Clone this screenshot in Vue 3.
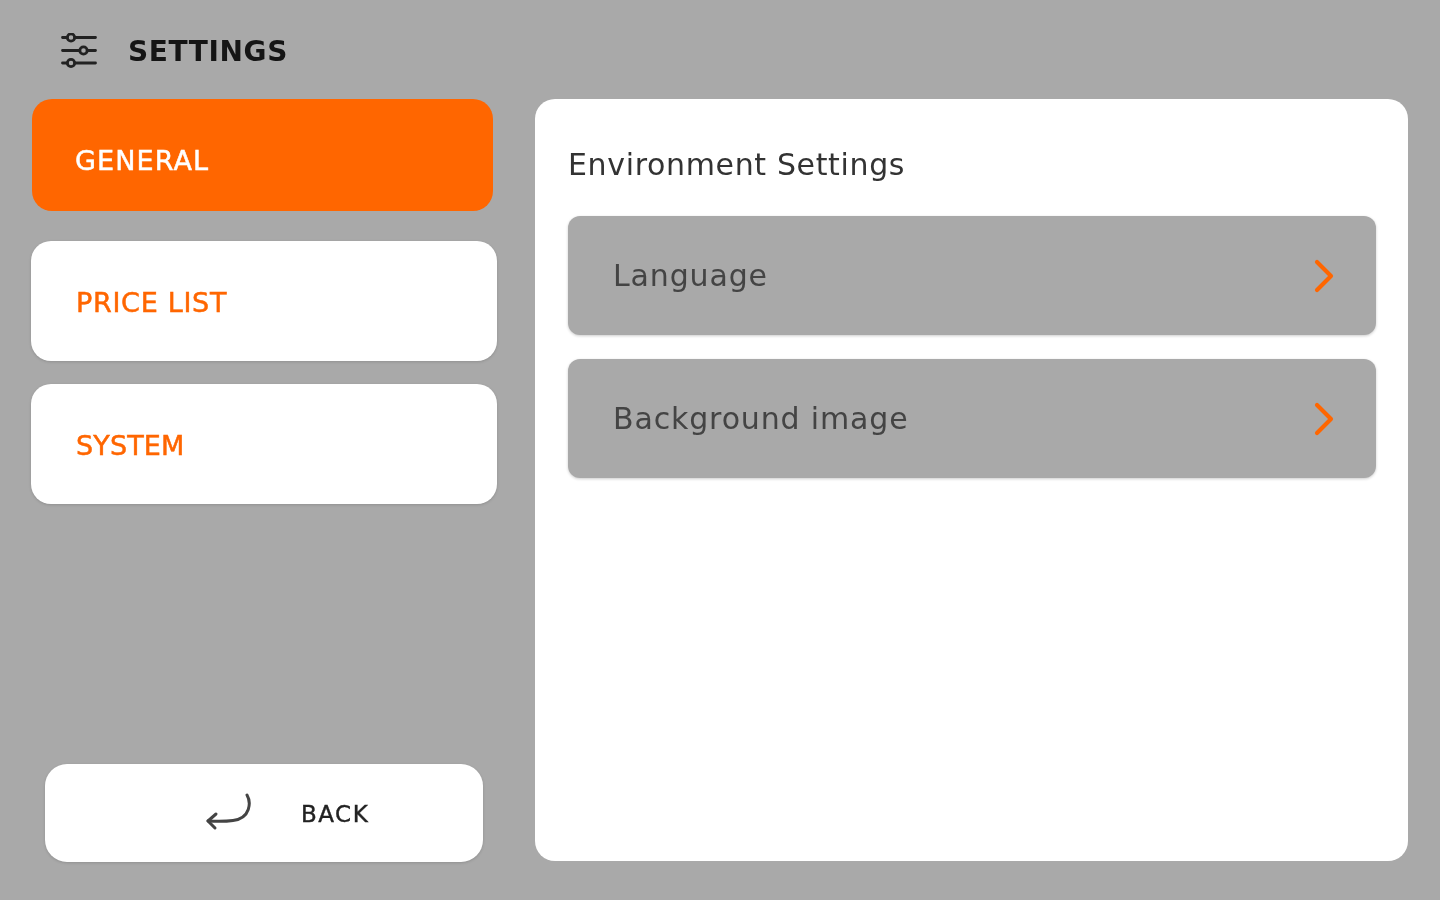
<script setup>
const tabs = [
  { label: 'GENERAL', kind: 'active' },
  { label: 'PRICE LIST', kind: 'plain price' },
  { label: 'SYSTEM', kind: 'plain last' },
]
const rows = ['Language', 'Background image']
</script>

<template>
  <div class="page">
    <header class="head">
      <svg class="head-icon" width="38" height="38" viewBox="0 0 38 38" fill="none" stroke="#222" stroke-width="2.800" stroke-linecap="round">
        <circle cx="11" cy="4.500" r="3.700" />
        <path d="M2.500 4.500H7.300M14.700 4.500H35.500" />
        <circle cx="23.500" cy="17.500" r="3.700" />
        <path d="M2.500 17.500H19.800M27.200 17.500H35.500" />
        <circle cx="11" cy="30" r="3.700" />
        <path d="M2.500 30H7.300M14.700 30H35.500" />
      </svg>
      <h1 class="head-title">SETTINGS</h1>
    </header>
    <div class="body">
      <aside class="side">
        <button v-for="t in tabs" :key="t.label" class="tab" :class="t.kind">{{ t.label }}</button>
        <button class="back">
          <svg class="back-icon" width="48" height="42" viewBox="0 0 48 42" fill="none" stroke="#444" stroke-width="3" stroke-linecap="round" stroke-linejoin="round">
            <path d="M42 2C46 9 46 25 28 27.500C21 28.500 12 28.500 3 28" />
            <path d="M11 21L3 28L10 35" />
          </svg>
          <span>BACK</span>
        </button>
      </aside>
      <main class="panel">
        <h2 class="panel-title">Environment Settings</h2>
        <div v-for="r in rows" :key="r" class="row">
          <span>{{ r }}</span>
          <svg width="22" height="34" viewBox="0 0 22 34" fill="none" stroke="#ff6600" stroke-width="4.200" stroke-linecap="round" stroke-linejoin="round">
            <path d="M4 3L18 17L4 31" />
          </svg>
        </div>
      </main>
    </div>
  </div>
</template>

<style>
html, body { margin: 0; background: #a9a9a9; }
</style>

<style scoped>
.page {
  width: 1440px;
  height: 900px;
  box-sizing: border-box;
  background: #a9a9a9;
  overflow: hidden;
  font-family: "DejaVu Sans", Inter, "Liberation Sans", sans-serif;
  filter: blur(0.7px);
}
.head {
  height: 99px;
  display: flex;
  align-items: center;
  padding: 4px 0 0 60px;
  box-sizing: border-box;
}
.head-icon { flex: none; }
.head-title {
  margin: 0 0 0 30px;
  font-size: 28px;
  font-weight: 700;
  letter-spacing: 0.6px;
  color: #151515;
}
.body {
  display: grid;
  grid-template-columns: 466px 873px;
  column-gap: 38px;
  padding-left: 31px;
  height: 762px;
}
.side {
  display: flex;
  flex-direction: column;
  height: 763px;
}
.tab {
  display: block;
  border: 0;
  text-align: left;
  font: inherit;
  font-size: 27px;
  font-weight: 400;
  -webkit-text-stroke: 0.5px currentColor;
  padding: 3px 0 0 45px;
  background: #fff;
  color: #ff6600;
  border-radius: 20px;
  height: 120px;
  margin-bottom: 23px;
  letter-spacing: 0.15px;
  box-shadow: 0 1px 3px rgba(0, 0, 0, 0.15);
}
.tab.price { letter-spacing: 0.7px; }
.tab.active {
  background: #ff6600;
  color: #fff;
  height: 112px;
  margin: 0 4px 30px 1px;
  padding: 10px 0 0 43px;
  letter-spacing: 1.1px;
  box-shadow: none;
}
.tab.last { margin-bottom: 0; }
.back {
  margin: auto 14px 0;
  height: 98px;
  border: 0;
  background: #fff;
  border-radius: 22px;
  display: flex;
  align-items: center;
  padding: 2px 0 0 160px;
  font: inherit;
  font-size: 23px;
  letter-spacing: 1.5px;
  -webkit-text-stroke: 0.4px currentColor;
  color: #222;
  box-shadow: 0 1px 3px rgba(0, 0, 0, 0.15);
}
.back-icon { margin-right: 48px; }
.panel {
  background: #fff;
  border-radius: 20px;
  padding: 0 32px 0 33px;
  box-sizing: border-box;
  height: 762px;
}
.panel-title {
  margin: 0;
  height: 117px;
  line-height: 131px;
  font-size: 30px;
  font-weight: 400;
  letter-spacing: 0.65px;
  color: #333;
}
.row {
  height: 119px;
  margin-bottom: 24px;
  background: #a9a9a9;
  border-radius: 12px;
  display: flex;
  align-items: center;
  justify-content: space-between;
  padding: 0 41px 0 45px;
  font-size: 30px;
  letter-spacing: 0.85px;
  color: #444;
  box-shadow: 0 1px 3px rgba(0, 0, 0, 0.2);
}
</style>
